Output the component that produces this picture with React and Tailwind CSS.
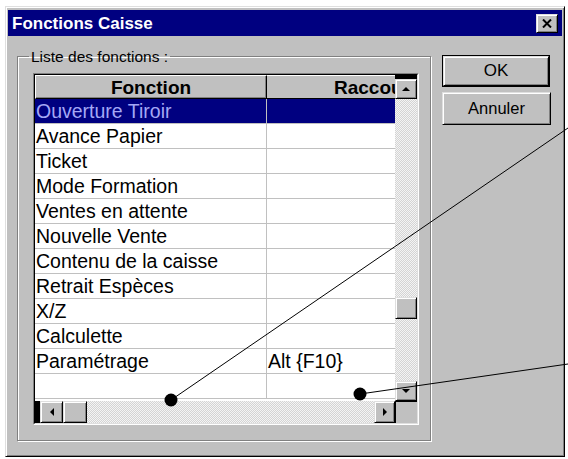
import React from "react"

const raised =
  "border border-t-[#dfdfdf] border-l-[#dfdfdf] border-r-black border-b-black shadow-[inset_1px_1px_#ffffff,inset_-1px_-1px_#808080] bg-[#c0c0c0]"
const dither =
  "bg-[repeating-conic-gradient(#d4d4d4_0_25%,#f4f4f4_0_50%)] bg-[length:2px_2px]"

const rows = [
  ["Ouverture Tiroir", ""],
  ["Avance Papier", ""],
  ["Ticket", ""],
  ["Mode Formation", ""],
  ["Ventes en attente", ""],
  ["Nouvelle Vente", ""],
  ["Contenu de la caisse", ""],
  ["Retrait Espèces", ""],
  ["X/Z", ""],
  ["Calculette", ""],
  ["Paramétrage", "Alt {F10}"],
  ["", ""]
]

function Tri({ dir }) {
  const pts = {
    up: "0,4 4,0 8,4",
    down: "0,0 8,0 4,4",
    left: "4,0 4,8 0,4",
    right: "0,0 0,8 4,4"
  }[dir]
  const vertical = dir === "up" || dir === "down"
  return (
    <svg width={vertical ? 8 : 4} height={vertical ? 4 : 8} viewBox={vertical ? "0 0 8 4" : "0 0 4 8"}>
      <polygon points={pts} fill="#000" />
    </svg>
  )
}

function ScrollBtn({ dir, className }) {
  return (
    <div className={`${raised} flex items-center justify-center ${className}`}>
      <Tri dir={dir} />
    </div>
  )
}

export default function App() {
  return (
    <div className="relative w-[568px] h-[459px] bg-white pt-[6px] pl-[5px] font-['Liberation_Sans',Arial,sans-serif] overflow-hidden">
      <div className={`${raised} w-[560px] h-[451px] pt-[3px] px-[2px]`}>
        {/* title bar */}
        <div className="h-[26px] bg-[#000080] flex items-center justify-between pl-[4px] pr-[4px]">
          <span className="text-white font-bold text-[17px] leading-none">Fonctions Caisse</span>
          <div className={`${raised} w-[22px] h-[19px] flex items-center justify-center`}>
            <svg width="10" height="9" viewBox="0 0 10 9">
              <path d="M1 0.5 L9 8.5 M9 0.5 L1 8.5" stroke="#000" strokeWidth="2" />
            </svg>
          </div>
        </div>

        <div className="flex pl-[9px] pt-[12px]">
          <fieldset className="m-0 w-[414px] border border-[#808080] shadow-[inset_1px_1px_#ffffff,1px_1px_#ffffff] pl-[15px] pr-[11px] pt-[8px] pb-[15px]">
            <legend className="-ml-[4px] px-[2px] text-[15.5px] leading-[17px] text-black">
              Liste des fonctions :
            </legend>

            {/* grid */}
            <div className="w-[386px] h-[352px] border border-t-[#808080] border-l-[#808080] border-r-white border-b-white">
              <div className="w-full h-full border border-t-black border-l-black border-r-[#dfdfdf] border-b-[#dfdfdf] flex flex-col">
                <div className="flex h-[326px]">
                  <div className="w-[360px] h-full bg-white overflow-hidden">
                    <div className="flex h-[24px]">
                      <div className="w-[232px] h-full border border-t-white border-l-white border-r-black border-b-black shadow-[inset_-1px_-1px_#808080] bg-[#c0c0c0] flex items-center justify-center">
                        <span className="font-bold text-[19px] leading-none text-black">Fonction</span>
                      </div>
                      <div className="w-[128px] h-full border-t border-b border-t-white border-b-black bg-[#c0c0c0] overflow-hidden flex items-center">
                        <span className="ml-[67px] font-bold text-[19px] leading-none text-black whitespace-nowrap">
                          Raccourci
                        </span>
                      </div>
                    </div>
                    {rows.map(([name, key], i) => {
                      const sel = i === 0
                      return (
                        <div
                          key={i}
                          className={`flex h-[25px] border-b border-[#c0c0c0] text-[19.5px] leading-none ${
                            sel ? "bg-[#000080] text-[#a4a8f6]" : "bg-white text-black"
                          }`}
                        >
                          <div className="w-[232px] h-full border-r border-[#c0c0c0] flex items-center pl-[1px] pt-[1px] whitespace-nowrap">
                            {name}
                          </div>
                          <div className="w-[128px] h-full flex items-center pl-[1px] pt-[1px] whitespace-nowrap">
                            {key}
                          </div>
                        </div>
                      )
                    })}
                  </div>

                  {/* vertical scrollbar */}
                  <div className="w-[22px] h-full flex flex-col">
                    <div className="h-[4px] bg-black" />
                    <ScrollBtn dir="up" className="h-[20px]" />
                    <div className={`flex-1 ${dither}`}>
                      <div className={`${raised} mt-[198px] h-[22px]`} />
                    </div>
                    <ScrollBtn dir="down" className="h-[20px]" />
                  </div>
                </div>

                {/* horizontal scrollbar */}
                <div className="flex h-[22px]">
                  <div className="w-[5px] h-full bg-black" />
                  <ScrollBtn dir="left" className="w-[23px] h-full" />
                  <div className={`w-[311px] h-full ${dither}`}>
                    <div className={`${raised} w-[24px] h-full`} />
                  </div>
                  <ScrollBtn dir="right" className="w-[21px] h-full" />
                  <div className="w-[22px] h-full bg-[#c0c0c0] border-l border-t border-black" />
                </div>
              </div>
            </div>
          </fieldset>

          {/* buttons */}
          <div className="ml-[11px] pt-[7px] flex flex-col">
            <div className="w-[108px] h-[32px] border border-black">
              <div className={`${raised} w-full h-full flex items-center justify-center text-[17px] text-black`}>
                OK
              </div>
            </div>
            <div className={`${raised} mt-[5px] w-[109px] h-[33px] flex items-center justify-center text-[16.5px] text-black`}>
              Annuler
            </div>
          </div>
        </div>
      </div>

      {/* callout lines */}
      <svg className="absolute left-0 top-0 pointer-events-none" width="568" height="459" viewBox="0 0 568 459">
        <line x1="171" y1="400" x2="568" y2="128" stroke="#000" strokeWidth="1" />
        <circle cx="171" cy="400" r="6.5" fill="#000" />
        <line x1="360" y1="394" x2="568" y2="364" stroke="#000" strokeWidth="1" />
        <circle cx="360" cy="394" r="6.5" fill="#000" />
      </svg>
    </div>
  )
}
